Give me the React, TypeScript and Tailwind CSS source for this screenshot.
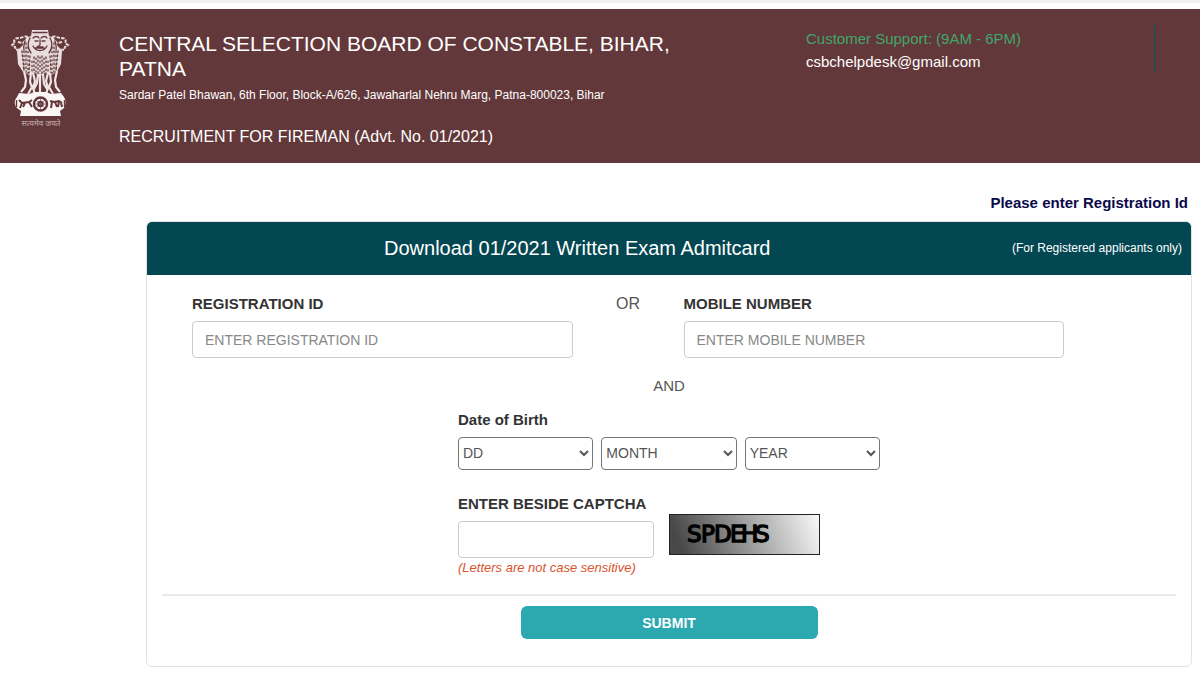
import type { ReactNode } from "react";

const DAYS = Array.from({ length: 31 }, (_, i) => String(i + 1).padStart(2, "0"));
const MONTHS = ["JAN", "FEB", "MAR", "APR", "MAY", "JUN", "JUL", "AUG", "SEP", "OCT", "NOV", "DEC"];
const YEARS = Array.from({ length: 40 }, (_, i) => String(2005 - i));

const Emblem = () => (
  <svg viewBox="0 0 60 100" className="h-[100px] w-[60px] shrink-0" role="img" aria-label="Emblem of India">
    {/* side lions */}
    <g fill="none" stroke="#e6d8d8" strokeWidth="2" strokeDasharray="3.5 1.2">
      <path d="M17 8C13 6 10 10 7 9C4 9 2 12 4 14L1 16L4 18L5 21L11 20L15 16" />
      <path d="M41 8C45 6 48 10 51 9C54 9 56 12 54 14L57 16L54 18L53 21L47 20L43 16" />
      <path d="M7 13l5 1l3-3M51 13l-5 1l-3-3" />
    </g>
    {/* manes */}
    <path
      d="M15 9L20 7L21 1h16l1 6l5 2l3 7l5 6l-1 13l-4 8l-6 3l-6-2l-5 3l-5-3l-6 2l-6-3l-5-8l-1-13l6-6z"
      fill="#e9dddd"
    />
    <g fill="none" stroke="#63383a" strokeWidth="1.3" strokeLinecap="round">
      <path d="M22 3.500h14M22 9c2-2 5-2 6 0M30 9c2-2 5-2 6 0M24 12h3M31 12h3M29 11v5l-3 2h6M22 17c3 6 11 6 14 0M25 19h8" />
      <path d="M19 9c-3 5-2 11 1 15M39 9c3 5 2 11-1 15M14 12c-1 4-2 6-1 9M44 12c1 4 2 6 1 9" />
      <path
        d="M11 22l2 20M15 14l0 30M19 27l-1 17M23 28l0 17M27 27l0 18M31 27l0 18M35 28l0 17M39 27l1 17M43 14l0 30M47 22l-2 20"
        strokeDasharray="1.6 2.4"
      />
      <path
        d="M13 20v24M17 16v30M21 30v14M25 27v18M29 26v20M33 27v18M37 30v14M41 16v30M45 20v24"
        strokeDasharray="1.3 2.9"
        strokeDashoffset="2"
      />
    </g>
    {/* legs */}
    <g fill="none" stroke="#efe5e5" strokeWidth="2.200">
      <path d="M13 42l2 9l-1 7l-4 5M20 44l-1 9l2 5l-4 7M22 44l2 8l-2 7l2 6M27 45l-1 9l-3 6M29 45v20M32 45l1 10l3 5M37 44l-2 8l2 7l-2 6M39 44l1 9l-2 5l4 7M46 42l-2 9l1 7l4 5" />
    </g>
    {/* abacus with the wheel */}
    <path
      d="M8 64l10 1l5-2h12l5 2l10-1l3 4c2 3 2 8 0 11l-4 3l1 5H9l1-5l-4-3c-3-3-3-8 0-11z"
      fill="#fbf6f6"
    />
    <g fill="none" stroke="#63383a">
      <circle cx="29.500" cy="75" r="6.500" strokeWidth="2.400" />
      <circle cx="29.500" cy="75" r="2.200" strokeWidth="2" />
      <path d="M29.500 69v12M23.500 75h12M25 71l9 8M34 71l-9 8" strokeWidth="0.600" />
      <path d="M8 71l3 3l7-1l3-2M11 74l-2 5M14 74l-2 4M18 73l3 5" strokeWidth="2" />
      <path d="M39 72l4 1l5-1l3 2M41 73l-1 6M44 73l2 5M48 72l-1 6M50 74l1 4" strokeWidth="2" />
      <path d="M5.500 71v7M53.500 71v7" strokeWidth="1.400" />
    </g>
    <text x="30" y="97" fill="#c4b0b1" fontSize="8" textAnchor="middle" fontFamily="'Noto Sans', sans-serif">
      सत्यमेव जयते
    </text>
  </svg>
);

const CaptchaImage = () => (
  <svg viewBox="0 0 151 41" className="h-[41px] w-[151px] shrink-0" role="img" aria-label="Captcha">
    <defs>
      <linearGradient id="captcha-bg" x1="0" x2="1" y1="0.1" y2="0">
        <stop offset="0" stopColor="#484848" />
        <stop offset="1" stopColor="#fafafa" />
      </linearGradient>
    </defs>
    <rect x="0.5" y="0.5" width="150" height="40" fill="url(#captcha-bg)" stroke="#222" />
    <text
      x="18 32 45 61 72 86"
      y="28"
      fontSize="23"
      fontFamily="'DejaVu Sans', sans-serif"
      stroke="#000"
      strokeWidth="1.4"
    >
      SPDEHS
    </text>
  </svg>
);

type TextFieldProps = { id: string; label: string; placeholder?: string };

const TextField = ({ id, label, placeholder }: TextFieldProps) => (
  <div>
    <label htmlFor={id} className="block text-[15px] leading-5 font-bold whitespace-nowrap text-[#333]">
      {label}
    </label>
    <input
      id={id}
      type="text"
      placeholder={placeholder}
      className="mt-[7px] h-[37px] w-full rounded border border-[#ccc] px-3 text-sm text-[#555] placeholder:text-[#888]"
    />
  </div>
);

type PickerProps = { label: string; first: string; options: string[] };

const Picker = ({ label, first, options }: PickerProps) => (
  <select
    aria-label={label}
    className="h-[33px] min-w-0 flex-1 rounded border border-[#767676] bg-white pb-0.5 text-sm text-[#555]"
  >
    <option>{first}</option>
    {options.map((option) => (
      <option key={option}>{option}</option>
    ))}
  </select>
);

const Row = ({ children }: { children: ReactNode }) => <div className="mx-auto w-[422px]">{children}</div>;

export default function App() {
  return (
    <div className="bg-white pb-2 font-['Liberation_Sans',Arial,sans-serif]">
      <div className="mb-1.5 h-[3px] bg-[#f1f1f4]" />

      <header className="flex min-h-[154px] bg-[#63383a] pt-5 pr-[44px] pl-[11px] text-white">
        <Emblem />
        <div className="ml-12 flex-1 pt-0.5">
          <h1 className="max-w-[600px] text-[21px] leading-[25px]">CENTRAL SELECTION BOARD OF CONSTABLE, BIHAR, PATNA</h1>
          <p className="mt-1 text-xs leading-5">
            Sardar Patel Bhawan, 6th Floor, Block-A/626, Jawaharlal Nehru Marg, Patna-800023, Bihar
          </p>
          <p className="mt-5 text-base leading-6">RECRUITMENT FOR FIREMAN (Advt. No. 01/2021)</p>
        </div>
        <div className="-mt-1 h-12 w-[350px] border-r-2 border-[#2f4a4b] pt-0.5 text-[15px] leading-[23px]">
          <p className="text-[#3fa76c]">Customer Support: (9AM - 6PM)</p>
          <a href="mailto:csbchelpdesk@gmail.com">csbchelpdesk@gmail.com</a>
        </div>
      </header>

      <main className="mt-[30px] mr-2 ml-[146px]">
        <p className="pr-1 text-right text-[15px] leading-5 font-bold text-[#0a0a4a]">Please enter Registration Id</p>

        <form
          className="mt-2 overflow-hidden rounded-md border border-[#e2e2e2] pb-[27px] text-[#555]"
          onSubmit={(e) => e.preventDefault()}
        >
          <div className="-mx-px -mt-px flex h-[54px] items-center bg-[#024751] pr-2.5 text-white">
            <h2 className="flex-1 pl-[238px] text-xl">Download 01/2021 Written Exam Admitcard</h2>
            <span className="text-xs">(For Registered applicants only)</span>
          </div>

          <div className="grid grid-cols-[1fr_111px_1fr] pt-[19px] pr-[127px] pl-[45px]">
            <TextField id="registration-id" label="REGISTRATION ID" placeholder="ENTER REGISTRATION ID" />
            <p className="text-center text-base leading-5">OR</p>
            <TextField id="mobile-number" label="MOBILE NUMBER" placeholder="ENTER MOBILE NUMBER" />
          </div>

          <p className="mt-[18px] text-center text-[15px] leading-5">AND</p>

          <Row>
            <fieldset className="mt-3.5">
              <legend className="text-[15px] leading-5 font-bold text-[#333]">Date of Birth</legend>
              <div className="mt-[7px] flex gap-2">
                <Picker label="Day" first="DD" options={DAYS} />
                <Picker label="Month" first="MONTH" options={MONTHS} />
                <Picker label="Year" first="YEAR" options={YEARS} />
              </div>
            </fieldset>
            <div className="mt-6 flex gap-[15px]">
              <div className="w-[196px]">
                <TextField id="captcha" label="ENTER BESIDE CAPTCHA" />
              </div>
              <div className="pt-5">
                <CaptchaImage />
              </div>
            </div>
            <p className="text-[13px] leading-5 text-[#d9532f] italic">(Letters are not case sensitive)</p>
          </Row>

          <hr className="mx-[15px] mt-4 border-t-2 border-[#eaeaea]" />

          <button
            type="submit"
            className="mx-auto mt-2.5 block h-[33px] w-[297px] rounded-md bg-[#2ca8b1] text-sm font-bold text-white"
          >
            SUBMIT
          </button>
        </form>
      </main>
    </div>
  );
}
